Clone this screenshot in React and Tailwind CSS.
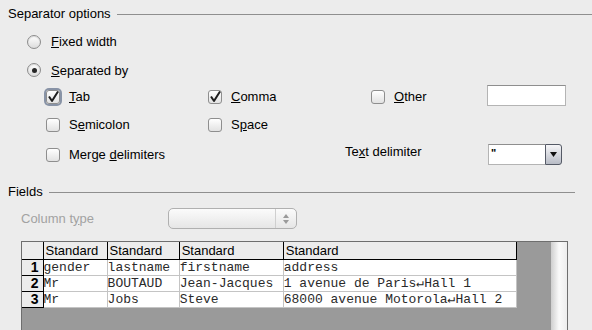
import React from "react";

const SANS = { fontFamily: '"Liberation Sans", Arial, sans-serif' };

function Radio({ checked }) {
  return (
    <span className="w-[14px] h-[14px] rounded-full border border-[#8c8c8c] bg-gradient-to-b from-[#ffffff] to-[#dcdcdc] shadow-[inset_0_1px_1px_rgba(0,0,0,0.15)] flex items-center justify-center shrink-0">
      {checked && <span className="w-[5px] h-[5px] rounded-full bg-[#262626]" />}
    </span>
  );
}

function Checkbox({ checked, focus }) {
  return (
    <span
      className={`w-[14px] h-[14px] rounded-[3px] border border-[#8e8e8e] bg-gradient-to-b from-[#ffffff] to-[#e2e2e2] flex items-center justify-center shrink-0 ${
        focus ? "shadow-[0_0_0_2px_#8893a6]" : ""
      }`}
    >
      {checked && (
        <svg width="12" height="12" viewBox="0 0 12 12">
          <path d="M2 5.5 L5 10 L11 0.5" fill="none" stroke="#1e1e1e" strokeWidth="2" strokeLinejoin="round" />
        </svg>
      )}
    </span>
  );
}

function CheckItem({ checked, focus, children }) {
  return (
    <div className="flex items-center h-[20px]">
      <Checkbox checked={checked} focus={focus} />
      <span className="ml-[9px] leading-[16px]">{children}</span>
    </div>
  );
}

function SectionHead({ label, right }) {
  return (
    <div className={`flex items-center h-[16px] pl-[8px] ${right}`}>
      <span className="leading-[16px]">{label}</span>
      <span className="flex-1 h-px bg-[#8f8f8f] ml-[6px]" />
    </div>
  );
}

const rows = [
  ["gender", "lastname", "firstname", "address"],
  ["Mr", "BOUTAUD", "Jean-Jacques", "1 avenue de Paris\u21b5Hall 1"],
  ["Mr", "Jobs", "Steve", "68000 avenue Motorola\u21b5Hall 2"],
];
const widths = [64, 72, 104, 233];

export default function App() {
  return (
    <div className="w-[592px] h-[330px] bg-[#ececec] overflow-hidden text-[13px] text-black flex flex-col" style={SANS}>
      <div className="mt-[6px]">
        <SectionHead label="Separator options" right="" />
      </div>

      <div className="mt-[10px] flex items-center h-[20px] pl-[27px]">
        <Radio />
        <span className="ml-[10px]"><u>F</u>ixed width</span>
      </div>
      <div className="mt-[9px] flex items-center h-[20px] pl-[27px]">
        <Radio checked />
        <span className="ml-[10px]"><u>S</u>eparated by</span>
      </div>

      <div className="mt-[7px] flex items-center h-[20px] pl-[46px]">
        <div className="w-[162px]">
          <CheckItem checked focus><u>T</u>ab</CheckItem>
        </div>
        <div className="w-[163px]">
          <CheckItem checked><u>C</u>omma</CheckItem>
        </div>
        <div className="w-[116px]">
          <CheckItem><u>O</u>ther</CheckItem>
        </div>
        <div className="w-[79px] h-[21px] mb-[4px] bg-white border border-[#b4b4b4] border-t-[#8e8e8e]" />
      </div>

      <div className="mt-[8px] flex items-center h-[20px] pl-[46px]">
        <div className="w-[162px]">
          <CheckItem>S<u>e</u>micolon</CheckItem>
        </div>
        <div className="w-[163px]">
          <CheckItem>S<u>p</u>ace</CheckItem>
        </div>
      </div>

      <div className="mt-[9px] flex items-start h-[21px] pl-[46px]">
        <div className="w-[299px] mt-[1px]">
          <CheckItem>Merge <u>d</u>elimiters</CheckItem>
        </div>
        <div className="w-[143px] leading-[16px]">
          Te<u>x</u>t delimiter
        </div>
        <div className="w-[74px] h-[21px] flex">
          <div className="flex-1 bg-white border border-[#b4b4b4] border-t-[#8e8e8e] border-r-0 pl-[2px] text-[11px] leading-[16px] font-bold">"</div>
          <div className="w-[17px] h-[21px] rounded-r-[3px] border border-[#555a66] bg-gradient-to-b from-[#f6f6f8] to-[#b8bcc6] flex items-center justify-center">
            <svg width="7" height="5" viewBox="0 0 7 5">
              <path d="M0 0 H7 L3.5 5 Z" fill="#111" />
            </svg>
          </div>
        </div>
      </div>

      <div className="mt-[19px]">
        <SectionHead label="Fields" right="pr-[17px]" />
      </div>

      <div className="mt-[8px] flex items-center h-[21px] pl-[21px]">
        <span className="w-[147px] text-[#a2a2a2]">Column t<u>y</u>pe</span>
        <div className="w-[129px] h-[21px] rounded-[5px] border border-[#b0b0b0] bg-gradient-to-b from-[#fbfbfb] to-[#e6e6e6] flex justify-end">
          <div className="w-[21px] h-full border-l border-[#cfcfcf] flex flex-col items-center justify-center gap-[2px]">
            <svg width="6" height="4" viewBox="0 0 6 4"><path d="M0 4 H6 L3 0 Z" fill="#9a9a9a" /></svg>
            <svg width="6" height="4" viewBox="0 0 6 4"><path d="M0 0 H6 L3 4 Z" fill="#9a9a9a" /></svg>
          </div>
        </div>
      </div>

      <div className="mt-[12px] ml-[21px] w-[547px] h-[100px] border-t border-l border-r border-[#6e6e6e] bg-[#9a9a9a] flex">
        <div className="flex-1">
          <table className="border-collapse table-fixed" style={{ width: 495 }}>
            <thead>
              <tr className="h-[17px]">
                <th className="w-[21px] bg-[#ececec] border-r border-b border-black p-0" />
                {widths.map((w, i) => (
                  <th
                    key={i}
                    style={{ width: w }}
                    className="bg-[#ececec] border-r border-b border-black p-0 pl-[2px] text-left font-normal leading-[15px] text-[13px]"
                  >
                    Standard
                  </th>
                ))}
              </tr>
            </thead>
            <tbody>
              {rows.map((r, ri) => (
                <tr key={ri} className="h-[16px]">
                  <td className="bg-[#ececec] border-r border-b border-black p-0 pr-[4px] text-right font-bold text-[14px] leading-[15px]">
                    {ri + 1}
                  </td>
                  {r.map((c, ci) => (
                    <td
                      key={ci}
                      className="bg-white border-r border-b border-[#c4c4c4] p-0 text-[13px] leading-[15px] text-[#2a2a2a] whitespace-nowrap overflow-hidden"
                      style={{ fontFamily: '"Liberation Mono", "Courier New", monospace' }}
                    >
                      {c}
                    </td>
                  ))}
                </tr>
              ))}
            </tbody>
          </table>
        </div>
        <div className="w-[16px] h-full bg-gradient-to-r from-[#cfcfcf] via-[#fafafa] to-[#ededed]" />
      </div>
    </div>
  );
}
